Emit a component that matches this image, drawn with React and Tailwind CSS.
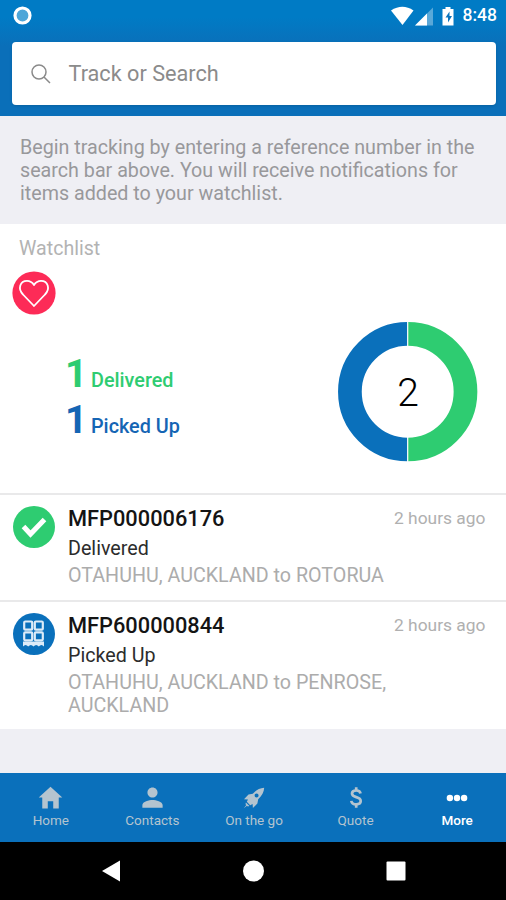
import React from "react";
import { IoMdHome, IoMdPerson } from "react-icons/io";

const shipments = [
  {
    id: "MFP000006176",
    status: "Delivered",
    route: "OTAHUHU, AUCKLAND to ROTORUA",
    time: "2 hours ago",
    icon: <DeliveredIcon />,
    height: "h-[107px]"
  },
  {
    id: "MFP600000844",
    status: "Picked Up",
    route: "OTAHUHU, AUCKLAND to PENROSE, AUCKLAND",
    time: "2 hours ago",
    icon: <PickedUpIcon />,
    height: "h-[129px]"
  }
];

const tabs = [
  { label: "Home", icon: <IoMdHome size={29} /> },
  { label: "Contacts", icon: <IoMdPerson size={27} /> },
  { label: "On the go", icon: <RocketIcon /> },
  { label: "Quote", icon: <DollarIcon /> },
  { label: "More", icon: <MoreIcon />, active: true }
];

function RocketIcon() {
  return (
    <svg className="h-[22px] w-[22px]" viewBox="0 0 22 22" fill="currentColor">
      <path
        fillRule="evenodd"
        d="M21.200 0.800C17 1 13 3 9.800 6.800L5.500 7.600L1 12.200L5 12.400L3.800 14.800L7.200 18.200L9.600 17L9.900 21L14.400 16.500L15.200 12.200C19 9 21 5 21.200 0.800zM13.600 6.400a2 2 0 1 1 0 4a2 2 0 1 1 0-4z"
      />
      <path d="M2.900 15.600L6.400 19.100L4.800 19.500L4 18.700L0.800 21.200L3.300 18L2.500 17.200z" />
    </svg>
  );
}

function DollarIcon() {
  return (
    <svg className="h-[21px] w-[14px]" viewBox="0 0 14 21" fill="none" stroke="currentColor" strokeWidth="2.700">
      <path d="M11.500 6.500C11.300 4.400 9.600 3.500 7.200 3.500C4.600 3.500 3 4.600 3 6.600C3 8.900 5 9.500 7.200 10.100C9.800 10.800 11.700 11.600 11.700 14C11.700 16.200 9.900 17.300 7.300 17.300C4.600 17.300 2.600 16.200 2.300 13.800" />
      <path d="M7.200 0.300V4M7.200 17V20.700" />
    </svg>
  );
}

function MoreIcon() {
  return (
    <svg className="h-[8px] w-[22px]" viewBox="0 0 22 8" fill="currentColor">
      <circle cx="3.900" cy="4" r="3.200" />
      <circle cx="11" cy="4" r="3.200" />
      <circle cx="18.100" cy="4" r="3.200" />
    </svg>
  );
}

function DeliveredIcon() {
  return (
    <svg className="block h-[42px] w-[42px] shrink-0" viewBox="0 0 42 42">
      <circle cx="21" cy="21" r="21" fill="#2ecc71" />
      <path d="M10.500 20.500l7 7.500L31.500 13.500" fill="none" stroke="#fff" strokeWidth="5" />
    </svg>
  );
}

function PickedUpIcon() {
  return (
    <svg className="block h-[42px] w-[42px] shrink-0" viewBox="0 0 42 42">
      <circle cx="21" cy="21" r="21" fill="#0a70bb" />
      <g fill="none" stroke="#dcebf8" strokeWidth="2.200">
        <rect x="11.200" y="8.500" width="8" height="8.200" rx="1" />
        <rect x="21.800" y="8.500" width="8" height="8.200" rx="1" />
        <rect x="11.200" y="19.300" width="8" height="8" rx="1" />
        <rect x="21.800" y="19.300" width="8" height="8" rx="1" />
      </g>
      <path
        d="M10 28.500h21v5q-2.600-3-5.200 0q-2.600-3-5.300 0q-2.600-3-5.300 0q-2.600-3-5.200 0z"
        fill="#dcebf8"
      />
    </svg>
  );
}

function StatusBar() {
  return (
    <div className="flex h-[31px] items-center justify-between pl-[13px] pr-[9px]">
      <svg className="h-[20px] w-[20px]" viewBox="0 0 20 20">
        <circle cx="9.500" cy="9.500" r="7.500" fill="#4ea6d8" stroke="#fff" strokeWidth="3.200" />
      </svg>
      <div className="flex items-center">
        <svg className="h-[20px] w-[66px] overflow-visible" viewBox="0 0 66 20">
          <path d="M-1 4.500Q10.500-3 21.500 4.500L10.500 19z" fill="#fff" />
          <path d="M41 1.500V19.500H23z" fill="#fff" fillOpacity="0.35" />
          <path d="M35 7.500V19.500H23z" fill="#fff" />
          <path d="M50.500 3h3V1h5v2h3v16.500h-11z" fill="#fff" />
          <path d="M57.500 5.500l-4 6h2.500v5l4-6.500h-2.500z" fill="#0a74bd" />
        </svg>
        <span className="ml-[5px] pt-px text-[17.5px] font-medium leading-none text-white">8:48</span>
      </div>
    </div>
  );
}

function Donut() {
  return (
    <div className="relative h-[140px] w-[140px]">
      <svg className="block h-full w-full" viewBox="0 0 140 140" fill="none" strokeWidth="23.700">
        <path d="M69.700 11.900A57.800 57.800 0 0 1 69.700 127.500" stroke="#2ecc71" />
        <path d="M69.700 11.900A57.800 57.800 0 0 0 69.700 127.500" stroke="#0a70bb" />
        <path d="M69.700 0V24M69.700 115V140" stroke="#fff" strokeWidth="1.200" />
      </svg>
      <span className="absolute inset-0 top-[2px] flex items-center justify-center text-[39px] font-light text-black">2</span>
    </div>
  );
}

export default function App() {
  return (
    <div className="flex h-[900px] w-[506px] flex-col overflow-hidden bg-[#efeff4] font-['Roboto',sans-serif]">
      <header className="h-[116px] bg-linear-to-b from-[#007bc5] from-15% to-[#0a6fb9] to-40%">
        <StatusBar />
        <div className="ml-[12px] mr-[10px] mt-[11px] flex h-[63px] items-center rounded-[4px] bg-white pl-[19px] shadow-sm">
          <svg className="h-[20px] w-[20px]" viewBox="0 0 20 20" fill="none" stroke="#8a8a8a" strokeWidth="1.500">
            <circle cx="8" cy="8" r="7" />
            <path d="M13 13l6 6" />
          </svg>
          <span className="ml-[17.5px] pt-[2px] text-[21.7px] text-[#8b8b8b]">Track or Search</span>
        </div>
      </header>

      <p className="h-[108px] whitespace-nowrap pl-[20px] pt-[20px] text-[19.7px] leading-[23px] text-[#98989b]">
        Begin tracking by entering a reference number in the
        <br />
        search bar above. You will receive notifications for
        <br />
        items added to your watchlist.
      </p>

      <section className="h-[269px] bg-white">
        <h2 className="pl-[19px] pt-[13px] text-[19.6px] leading-[24px] text-[#b3b3b3]">Watchlist</h2>
        <svg className="ml-[12px] mt-[10px] block h-[44px] w-[44px]" viewBox="0 0 44 44">
          <circle cx="22" cy="22" r="21.600" fill="#fd2b57" />
          <path
            d="M22 35L11 23.500C5.500 18 8 9.800 15 9.800C18.500 9.800 20.800 12 22 14C23.200 12 25.500 9.800 29 9.800C36 9.800 38.500 18 33 23.500z"
            fill="none"
            stroke="#fff"
            strokeWidth="1.800"
            strokeLinejoin="round"
          />
        </svg>
        <div className="mt-[7px] flex justify-between pl-[65px] pr-[28px]">
          <div className="pt-[29px] font-medium">
            <div className="flex h-[46px] items-baseline text-[#2ecc71]">
              <span className="w-[26px] text-[39px] font-bold leading-[46px]">1</span>
              <span className="text-[19.8px]">Delivered</span>
            </div>
            <div className="flex h-[46px] items-baseline text-[#1565b4]">
              <span className="w-[26px] text-[39px] font-bold leading-[46px]">1</span>
              <span className="text-[19.8px]">Picked Up</span>
            </div>
          </div>
          <Donut />
        </div>
      </section>

      <section className="bg-white">
        {shipments.map((item) => (
          <div key={item.id} className={`${item.height} flex border-t-2 border-[#e9e9ea] pl-[13px] pt-[11px]`}>
            {item.icon}
            <div className="ml-[13px] w-[340px] shrink-0">
              <div className="text-[21.8px] font-medium leading-[26px] text-[#141414]">{item.id}</div>
              <div className="mt-[5px] text-[19.7px] leading-[24px] text-[#2c2c2c]">{item.status}</div>
              <div className="mt-[3px] text-[19.7px] leading-[23px] text-[#acacac]">{item.route}</div>
            </div>
            <span className="-ml-[14px] whitespace-nowrap pt-px text-[17.4px] leading-[22px] text-[#b0b0b0]">{item.time}</span>
          </div>
        ))}
      </section>

      <nav className="mt-auto grid h-[69px] w-[508px] shrink-0 grid-cols-5 bg-[#0a70bb]">
        {tabs.map((tab) => (
          <div
            key={tab.label}
            className={`flex flex-col items-center pt-[9px] ${tab.active ? "text-white" : "text-[#b4c4cf]"}`}
          >
            <div className="flex h-[31px] items-center">{tab.icon}</div>
            <span className={`-mt-px text-[13.5px] leading-[16px] ${tab.active ? "font-medium" : ""}`}>{tab.label}</span>
          </div>
        ))}
      </nav>

      <footer className="flex h-[58px] shrink-0 items-center bg-black pl-[102px]">
        <svg className="h-[22px] w-[304px]" viewBox="0 0 304 22" fill="#fff">
          <path d="M18 0.500V21.500L0 11z" />
          <circle cx="151.500" cy="11" r="10.500" />
          <rect x="284.500" y="1.500" width="19" height="19" rx="1" />
        </svg>
      </footer>
    </div>
  );
}
